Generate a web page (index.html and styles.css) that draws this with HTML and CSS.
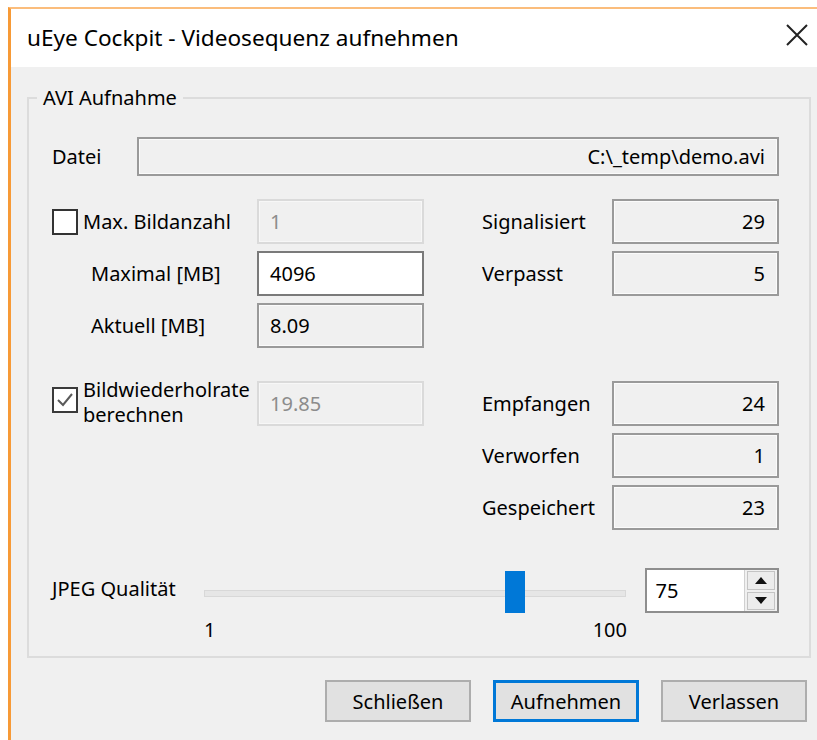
FILE: index.html
```html
<!DOCTYPE html>
<html lang="de">
<head>
<meta charset="utf-8">
<title>uEye Cockpit - Videosequenz aufnehmen</title>
<link rel="stylesheet" href="styles.css">
</head>
<body>
<div class="window">
  <div class="titlebar">
    <span class="title">uEye Cockpit - Videosequenz aufnehmen</span>
    <svg class="close" width="22" height="22" viewBox="0 0 22 22" aria-hidden="true">
      <path d="M1 1 L21 21 M21 1 L1 21" stroke="#222" stroke-width="2" fill="none"/>
    </svg>
  </div>

  <div class="content">
    <fieldset class="group">
      <legend>AVI Aufnahme</legend>

      <div class="file-row">
        <span class="label">Datei</span>
        <div class="field ro right short">C:\_temp\demo.avi</div>
      </div>

      <div class="stats">
        <label class="check">
          <span class="box"></span>
          <span>Max. Bildanzahl</span>
        </label>
        <div class="field disabled">1</div>
        <span class="label r">Signalisiert</span>
        <div class="field ro right">29</div>

        <span class="label indent">Maximal [MB]</span>
        <div class="field edit">4096</div>
        <span class="label r">Verpasst</span>
        <div class="field ro right">5</div>

        <span class="label indent">Aktuell [MB]</span>
        <div class="field ro">8.09</div>
        <div class="wide"></div>

        <div class="spacer"></div>

        <label class="check">
          <span class="box checked">
            <svg width="18" height="18" viewBox="0 0 18 18" aria-hidden="true">
              <path d="M2 9 L7 14 L16 3" stroke="#5a5a5a" stroke-width="2" fill="none"/>
            </svg>
          </span>
          <span class="two-line">Bildwiederholrate<br>berechnen</span>
        </label>
        <div class="field disabled">19.85</div>
        <span class="label r">Empfangen</span>
        <div class="field ro right">24</div>

        <div class="wide"></div>
        <span class="label r">Verworfen</span>
        <div class="field ro right">1</div>

        <div class="wide"></div>
        <span class="label r">Gespeichert</span>
        <div class="field ro right">23</div>
      </div>

      <div class="quality">
        <span class="label q-label">JPEG Qualität</span>
        <div class="slider">
          <div class="track"></div>
          <div class="thumb" style="left: 301px"></div>
        </div>
        <div class="spin">
          <span class="spin-value">75</span>
          <div class="spin-buttons">
            <span class="spin-btn">
              <svg width="12" height="7" viewBox="0 0 12 7" aria-hidden="true"><path d="M0 7 L6 0 L12 7 Z" fill="#111"/></svg>
            </span>
            <span class="spin-btn">
              <svg width="12" height="7" viewBox="0 0 12 7" aria-hidden="true"><path d="M0 0 L6 7 L12 0 Z" fill="#111"/></svg>
            </span>
          </div>
        </div>
      </div>

      <div class="ticks">
        <span>1</span>
        <span>100</span>
      </div>
    </fieldset>

    <div class="buttons">
      <button class="btn">Schließen</button>
      <button class="btn default">Aufnehmen</button>
      <button class="btn">Verlassen</button>
    </div>
  </div>
</div>
</body>
</html>
```

FILE: styles.css
```css
html, body {
  margin: 0;
  padding: 0;
  background: #ffffff;
}

body {
  font-family: "Noto Sans", "Open Sans", sans-serif;
  font-size: 20px;
  line-height: 24px;
  color: #000;
}

.window {
  margin: 7px 0 0 8px;
  border-top: 2px solid #fbbd7c;
  border-left: 3px solid #f79a36;
  min-height: 740px;
  background: #f0f0f0;
}

/* title bar */
.titlebar {
  height: 58px;
  background: #ffffff;
  display: flex;
  align-items: center;
  justify-content: space-between;
  padding: 0 9px 0 16px;
  box-sizing: border-box;
}

.title {
  font-size: 22.6px;
  color: #000;
}

.close {
  display: block;
  margin-top: -6px;
}

/* dialog body */
.content {
  padding: 19px 6px 0 16px;
}

.group {
  margin: 0;
  min-width: 0;
  border: 2px solid #dcdcdc;
  padding: 27px 30px 14px 23px;
}

.group legend {
  padding: 0 6px;
  margin-left: -15px;
  line-height: 24px;
}

.label {
  display: flex;
  align-items: center;
  white-space: nowrap;
}

/* text fields */
.field {
  box-sizing: border-box;
  height: 45px;
  border: 2px solid #9a9a9a;
  background: #f0f0f0;
  display: flex;
  align-items: center;
  padding: 0 11px;
  white-space: nowrap;
}

.field.right {
  justify-content: flex-end;
  padding-right: 12px;
}

.field.ro {
  box-shadow: inset 0 0 0 1px #fbfbfb;
}

.field.edit {
  background: #ffffff;
  border-color: #7a7a7a;
}

.field.disabled {
  border-color: #dadada;
  color: #8c8c8c;
  box-shadow: inset 0 0 0 1px #f7f7f7;
}

.field.short {
  height: 39px;
}

.file-row {
  display: grid;
  grid-template-columns: 85px 1fr;
  margin-bottom: 23px;
}

/* counters grid */
.stats {
  display: grid;
  grid-template-columns: 205px 167px 188px 167px;
  grid-template-rows: 45px 45px 45px 19px 45px 45px 45px;
  row-gap: 7px;
}

.stats .label.r {
  padding-left: 58px;
}

.stats .label.indent {
  padding-left: 39px;
}

.stats .wide {
  grid-column: span 2;
}

.stats .spacer {
  grid-column: 1 / -1;
}

.check {
  display: flex;
  align-items: center;
  gap: 5px;
}

.two-line {
  line-height: 25px;
  margin-top: -3px;
}

.box {
  box-sizing: border-box;
  width: 26px;
  height: 26px;
  border: 2px solid #333;
  background: #fff;
  flex: none;
  display: flex;
  align-items: center;
  justify-content: center;
}

.box.checked {
  border-color: #3a3a3a;
  margin-top: -8px;
}

/* slider + spin box */
.quality {
  display: flex;
  align-items: center;
  margin-top: 38px;
  height: 45px;
}

.q-label {
  width: 153px;
  margin-top: -4px;
}

.slider {
  position: relative;
  width: 423px;
  height: 45px;
}

.track {
  position: absolute;
  left: 0;
  right: 0;
  top: 22px;
  height: 7px;
  box-sizing: border-box;
  border: 1px solid #d8d8d8;
  background: #e6e6e6;
}

.thumb {
  position: absolute;
  top: 3px;
  width: 20px;
  height: 42px;
  background: #0078d7;
}

.spin {
  box-sizing: border-box;
  margin-left: 19px;
  width: 135px;
  height: 45px;
  border: 2px solid #8e8e8e;
  background: #fff;
  display: flex;
}

.spin-value {
  flex: 1;
  display: flex;
  align-items: center;
  padding-left: 9px;
}

.spin-buttons {
  width: 33px;
  display: flex;
  flex-direction: column;
  justify-content: center;
  gap: 2px;
  padding: 1px 2px;
  box-sizing: border-box;
  background: #f0f0f0;
  border-left: 1px solid #d0d0d0;
}

.spin-btn {
  flex: 1;
  display: flex;
  align-items: center;
  justify-content: center;
  background: #ececec;
  border: 1px solid #c4c4c4;
}

.ticks {
  display: flex;
  justify-content: space-between;
  width: 423px;
  margin-left: 152px;
  margin-top: 5px;
}

/* dialog buttons */
.buttons {
  display: flex;
  justify-content: flex-end;
  gap: 22px;
  padding: 22px 4px 0 0;
}

.btn {
  box-sizing: border-box;
  width: 146px;
  height: 42px;
  border: 2px solid #adadad;
  background: #e1e1e1;
  font-family: inherit;
  font-size: 20px;
  color: #000;
  padding: 0;
}

.btn.default {
  border-color: #0078d7;
  box-shadow: inset 0 0 0 1px #0078d7;
}
```
